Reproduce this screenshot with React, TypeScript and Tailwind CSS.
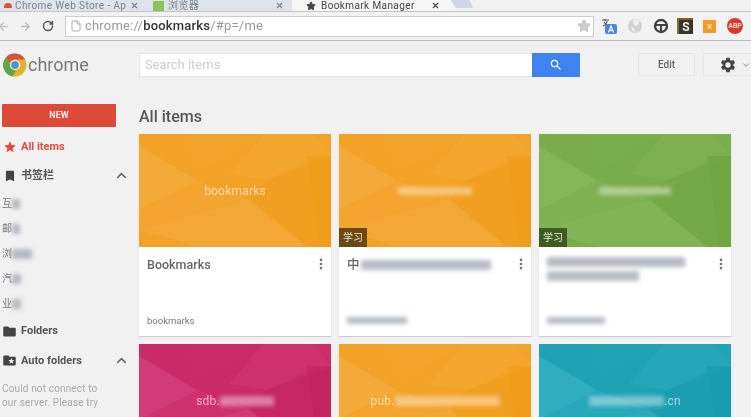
import { ArrowLeft, ArrowRight, ChevronUp, EllipsisVertical, File, RotateCw, Star, X, ChevronDown } from 'lucide-react';
import { MdBookmark, MdFolder, MdFolderSpecial, MdSearch, MdSettings, MdStar } from 'react-icons/md';

const FONT = "font-['Roboto','Noto_Sans_CJK_SC',sans-serif]";

function ChromeLogo() {
  return (
    <svg width="24" height="24" viewBox="0 0 24 24">
      <circle cx="12" cy="12" r="11.5" fill="#e0b52c" />
      <path d="M12 .5A11.5 11.5 0 0 1 22 6.5H12a5.6 5.6 0 0 0-5.2 3.4L3 4.2A11.5 11.5 0 0 1 12 .5Z" fill="#d9503f" />
      <path d="M3 4.2l4.3 7.6A5.5 5.5 0 0 0 13 17.4L9.6 23.2A11.5 11.5 0 0 1 3 4.2Z" fill="#5da844" />
      <circle cx="12" cy="12" r="5" fill="#fff" />
      <circle cx="12" cy="12" r="3.9" fill="#5a8fd6" />
    </svg>
  );
}

// Facets on the card pictures, same layout for every colour
function CardArt({ base, light, dark }: { base: string; light: string; dark: string }) {
  return (
    <svg className="absolute inset-0 h-full w-full" viewBox="0 0 192 113" preserveAspectRatio="none">
      <rect width="192" height="113" fill={base} />
      <polygon points="0,12 58,46 0,76" fill={light} opacity="0.3" />
      <polygon points="0,76 58,46 110,65 0,96" fill={light} opacity="0.15" />
      <polygon points="0,96 110,65 168,113 60,113" fill={light} opacity="0.25" />
      <polygon points="45,0 125,0 60,38" fill={light} opacity="0.05" />
      <polygon points="125,0 175,0 192,22 128,46 90,40" fill={light} opacity="0.14" />
      <polygon points="175,0 192,0 192,22" fill={light} opacity="0.06" />
      <polygon points="168,22 192,22 192,113 180,113" fill={dark} opacity="0.4" />
      <polygon points="128,46 168,28 180,113 168,113 110,65" fill={dark} opacity="0.2" />
      <polygon points="0,0 45,0 60,38 58,46 0,12" fill={light} opacity="0.03" />
    </svg>
  );
}

function Blur({ w, h = 'h-[10px]', tone = 'bg-gray-400/70' }: { w: string; h?: string; tone?: string }) {
  return <span className={`inline-block blur-[2px] ${w} ${h} ${tone}`} />;
}

function Card({ children, art, caption, body, foot }: {
  children?: React.ReactNode;
  art: { base: string; light: string; dark: string };
  caption: React.ReactNode;
  body?: React.ReactNode;
  foot?: React.ReactNode;
}) {
  return (
    <div className="flex h-[202px] flex-col bg-white shadow-[0_1px_1px_rgba(0,0,0,0.15)]">
      <div className="relative flex h-[113px] shrink-0 items-center justify-center">
        <CardArt {...art} />
        <div className="relative text-[12px] tracking-[0.2px] text-white/60">{caption}</div>
        {children}
      </div>
      <div className="flex flex-1 flex-col pb-[8px] pl-[8px] pr-[9px] pt-[10px]">
        <div className="flex flex-1 items-start justify-between">
          <div className="text-[12.5px] font-medium leading-[16px] text-[#666]">{body}</div>
          <EllipsisVertical size={14} strokeWidth={2.6} className="mr-[-6px] text-[#777]" />
        </div>
        <div className="text-[9.5px] leading-[14px] text-[#777]">{foot}</div>
      </div>
    </div>
  );
}

const ORANGE = { base: '#f2a226', light: '#f8bd62', dark: '#ee960f' };
const GREEN = { base: '#79ac4a', light: '#a0cb76', dark: '#659a38' };
const PINK = { base: '#ca2a66', light: '#e2669a', dark: '#b81c58' };
const TEAL = { base: '#1ea2b5', light: '#5cc7d4', dark: '#0f93a8' };

function NavRow({ icon, label, tone = 'text-[#555]', arrow }: { icon: React.ReactNode; label: string; tone?: string; arrow?: boolean }) {
  return (
    <div className={`flex items-center text-[11px] font-bold ${tone}`}>
      <span className="flex w-[19px] justify-center pr-[4px]">{icon}</span>
      <span className="flex-1">{label}</span>
      {arrow && <ChevronUp size={15} strokeWidth={2.4} className="text-[#666]" />}
    </div>
  );
}

export default function App() {
  return (
    <div className={`${FONT} flex h-[417px] w-[751px] flex-col overflow-hidden bg-[#f1f1f1] blur-[0.4px]`}>
      {/* Tab strip */}
      <div className="flex h-[12px] items-end overflow-hidden border-b border-[#c4c4c4] bg-[#f0f0f0] text-[10px] tracking-[0.4px]">
        <div className="flex h-full w-[147px] items-center gap-[3px] bg-[#dfe3ea] pl-[4px] pr-[8px] text-[#7a8290]">
          <span className="h-[5px] w-[8px] rounded-t-full bg-[#d0563f]" />
          <span className="flex-1 truncate">Chrome Web Store - Ap</span>
          <X size={9} strokeWidth={3} />
        </div>
        <div className="flex h-full w-[145px] items-center gap-[4px] bg-[#dfe3ea] pl-[6px] pr-[8px] text-[#7a8290]">
          <span className="h-[10px] w-[11px] bg-[#8fc05a]" />
          <span className="flex-1">浏览器</span>
          <X size={9} strokeWidth={3} />
        </div>
        <div className="flex h-full w-[155px] items-center gap-[5px] bg-[#f6f6f6] pl-[14px] pr-[7px] text-[#444]">
          <Star size={10} fill="#444" />
          <span className="flex-1 whitespace-nowrap">Bookmark Manager</span>
          <X size={9} strokeWidth={3} />
        </div>
        <svg width="32" height="12" viewBox="0 0 32 12" className="shrink-0">
          <polygon points="0,0 3,0 9,11 0,11" fill="#f6f6f6" />
          <polygon points="3,0 22,0 26,9 9,9" fill="#cfd5e2" />
        </svg>
      </div>
      {/* Toolbar */}
      <div className="flex h-[29px] items-center border-b border-[#bbb] bg-[#f2f2f2] pr-[8px]">
        <ArrowLeft size={13} strokeWidth={2.5} className="ml-[-3px] text-[#c4c4c4]" />
        <ArrowRight size={13} strokeWidth={2.5} className="ml-[9px] text-[#bbb]" />
        <RotateCw size={12} strokeWidth={3} className="ml-[10px] text-[#555]" />
        <div className="ml-[11px] flex h-[21px] w-[530px] items-center border border-[#ccc] bg-white pl-[4px] pr-[2px] text-[13px] tracking-[0.2px] text-[#999]">
          <File size={12} className="text-[#aaa]" />
          <span className="ml-[3px] flex-1">chrome://<span className="font-medium text-[#333]">bookmarks</span>/#p=/me</span>
          <Star size={14} fill="#ccc" className="text-[#ccc]" />
        </div>
        <div className="ml-[7px] flex items-center gap-[10px]">
          <svg width="16" height="16" viewBox="0 0 16 16">
            <path d="M1 2h7M4 1v2M2 8c2-1 4-3 4-5M3 4c1 2 2 3 4 4" fill="none" stroke="#556" strokeWidth="1.1" />
            <rect x="4" y="6" width="12" height="10" rx="2" fill="#4b86dc" />
            <path d="M7.5 14.5 10 8l2.500 6.500M8.500 12.500h3" fill="none" stroke="#fff" strokeWidth="1.2" />
          </svg>
          <svg width="16" height="16" viewBox="0 0 16 16">
            <circle cx="8" cy="8" r="7" fill="#d2d2d2" />
            <path d="M6 2a6 6 0 0 1 6 1L11 7l-3 1-2-3ZM4 9l3 1 1 4a6 6 0 0 1-4-5Z" fill="#f0f0f0" />
          </svg>
          <svg width="16" height="16" viewBox="0 0 16 16">
            <circle cx="8" cy="8" r="6" fill="none" stroke="#444" strokeWidth="2.4" />
            <path d="M2 7h12M8 8v5" stroke="#444" strokeWidth="2.2" />
          </svg>
          <span className="ml-[-2px] flex h-[16px] w-[16px] items-center justify-center border-l-2 border-t-2 border-l-[#6f7a3a] border-t-[#8a5a2a] bg-[#33382a] text-[12px] font-bold text-[#f4f0e4]">S</span>
          <span className="flex h-[13px] w-[13px] items-center justify-center bg-[#f39a2b] text-[10px] font-bold text-[#fde7c4]">×</span>
          <span className="ml-[1px] flex h-[16px] w-[16px] items-center justify-center rounded-full bg-[#d8382f] text-[7px] font-bold text-white/80">ABP</span>
        </div>
      </div>
      {/* Page header */}
      <div className="flex h-[50px] shrink-0 items-center pb-[3px]">
        <div className="flex w-[139px] items-center pl-[3px]">
          <ChromeLogo />
          <span className="ml-[1px] text-[18px] text-[#777]">chrome</span>
        </div>
        <div className="flex h-[24px] w-[442px] items-center border border-[#e4e4e4] bg-white pl-[5px] text-[13px] text-[#ccc]">
          <span className="flex-1">Search items</span>
          <div className="mr-[-1px] flex h-[24px] w-[48px] items-center justify-center bg-[#3f83f0]">
            <MdSearch size={14} className="text-white" />
          </div>
        </div>
        <div className="ml-[58px] flex h-[23px] w-[57px] items-center justify-center border border-[#e6e6e6] text-[10px] font-medium text-[#666]">Edit</div>
        <div className="ml-[8px] flex h-[23px] flex-1 items-center border border-r-0 border-[#e6e6e6] pl-[15px]">
          <MdSettings size={18} className="text-[#444]" />
          <ChevronDown size={10} className="ml-[4px] text-[#777]" />
        </div>
      </div>
      <div className="flex min-h-0 flex-1">
        {/* Sidebar */}
        <aside className="w-[139px] shrink-0 pl-[2px] pt-[13px]">
          <div className="flex h-[23px] w-[114px] items-center justify-center rounded-[1px] bg-[#dd4a38] text-[9px] font-bold text-white/90">NEW</div>
          <div className="mt-[12px] w-[127px]">
            <NavRow tone="text-[#e84a3d]" icon={<MdStar size={14} />} label="All items" />
            <div className="mt-[12px]">
              <NavRow icon={<MdBookmark size={14} className="text-[#444]" />} label="书签栏" arrow />
            </div>
            <div className="mt-[13px] flex flex-col gap-[11px] text-[10px] leading-[14px] text-[#777]">
              <div className="flex h-[14px] items-center">互<Blur w="w-[8px]" /></div>
              <div className="flex h-[14px] items-center">邮<Blur w="w-[8px]" /></div>
              <div className="flex h-[14px] items-center">浏<Blur w="w-[20px]" /></div>
              <div className="flex h-[14px] items-center">汽<Blur w="w-[9px]" /></div>
              <div className="flex h-[14px] items-center">业<Blur w="w-[9px]" /></div>
            </div>
            <div className="mt-[12px]">
              <NavRow icon={<MdFolder size={15} className="text-[#444]" />} label="Folders" />
            </div>
            <div className="mt-[13px]">
              <NavRow icon={<MdFolderSpecial size={15} className="text-[#444]" />} label="Auto folders" arrow />
            </div>
            <p className="mt-[13px] pr-[24px] text-[10px] leading-[14px] tracking-[0.15px] text-[#aaa]">Could not connect to our server. Please try</p>
          </div>
        </aside>
        {/* Items */}
        <main className="min-w-0 flex-1">
          <h1 className="mt-[16px] text-[16px] font-medium leading-[20px] text-[#555]">All items</h1>
          <div className="mt-[7px] grid w-[592px] grid-cols-3 gap-x-[8px] gap-y-[8px]">
            <Card art={ORANGE} caption="bookmarks" body="Bookmarks" foot="bookmarks" />
            <Card
              art={ORANGE}
              caption={<Blur w="w-[74px]" h="h-[8px]" tone="bg-white/40" />}
              body={<span className="flex items-center gap-[1px]">中<Blur w="w-[130px]" /></span>}
              foot={<Blur w="w-[60px]" h="h-[7px]" />}
            >
              <span className="absolute bottom-0 left-0 flex h-[19px] w-[28px] items-center justify-center bg-[#6b4a12] text-[10px] text-[#f1e6d0]">学习</span>
            </Card>
            <Card
              art={GREEN}
              caption={<Blur w="w-[72px]" h="h-[8px]" tone="bg-white/40" />}
              body={
                <span className="flex flex-col gap-[4px] pt-[0px]">
                  <Blur w="w-[138px]" />
                  <Blur w="w-[92px]" />
                </span>
              }
              foot={<Blur w="w-[58px]" h="h-[7px]" />}
            >
              <span className="absolute bottom-0 left-0 flex h-[19px] w-[28px] items-center justify-center bg-[#3f5a22] text-[10px] text-[#e8efd8]">学习</span>
            </Card>
            <Card art={PINK} caption={<span className="flex items-center">sdb.<Blur w="w-[54px]" tone="bg-white/40" /></span>} />
            <Card art={ORANGE} caption={<span className="flex items-center">pub.<Blur w="w-[105px]" tone="bg-white/40" /></span>} />
            <Card art={TEAL} caption={<span className="flex items-center"><Blur w="w-[75px]" tone="bg-white/40" />.cn</span>} />
          </div>
        </main>
      </div>
    </div>
  );
}
